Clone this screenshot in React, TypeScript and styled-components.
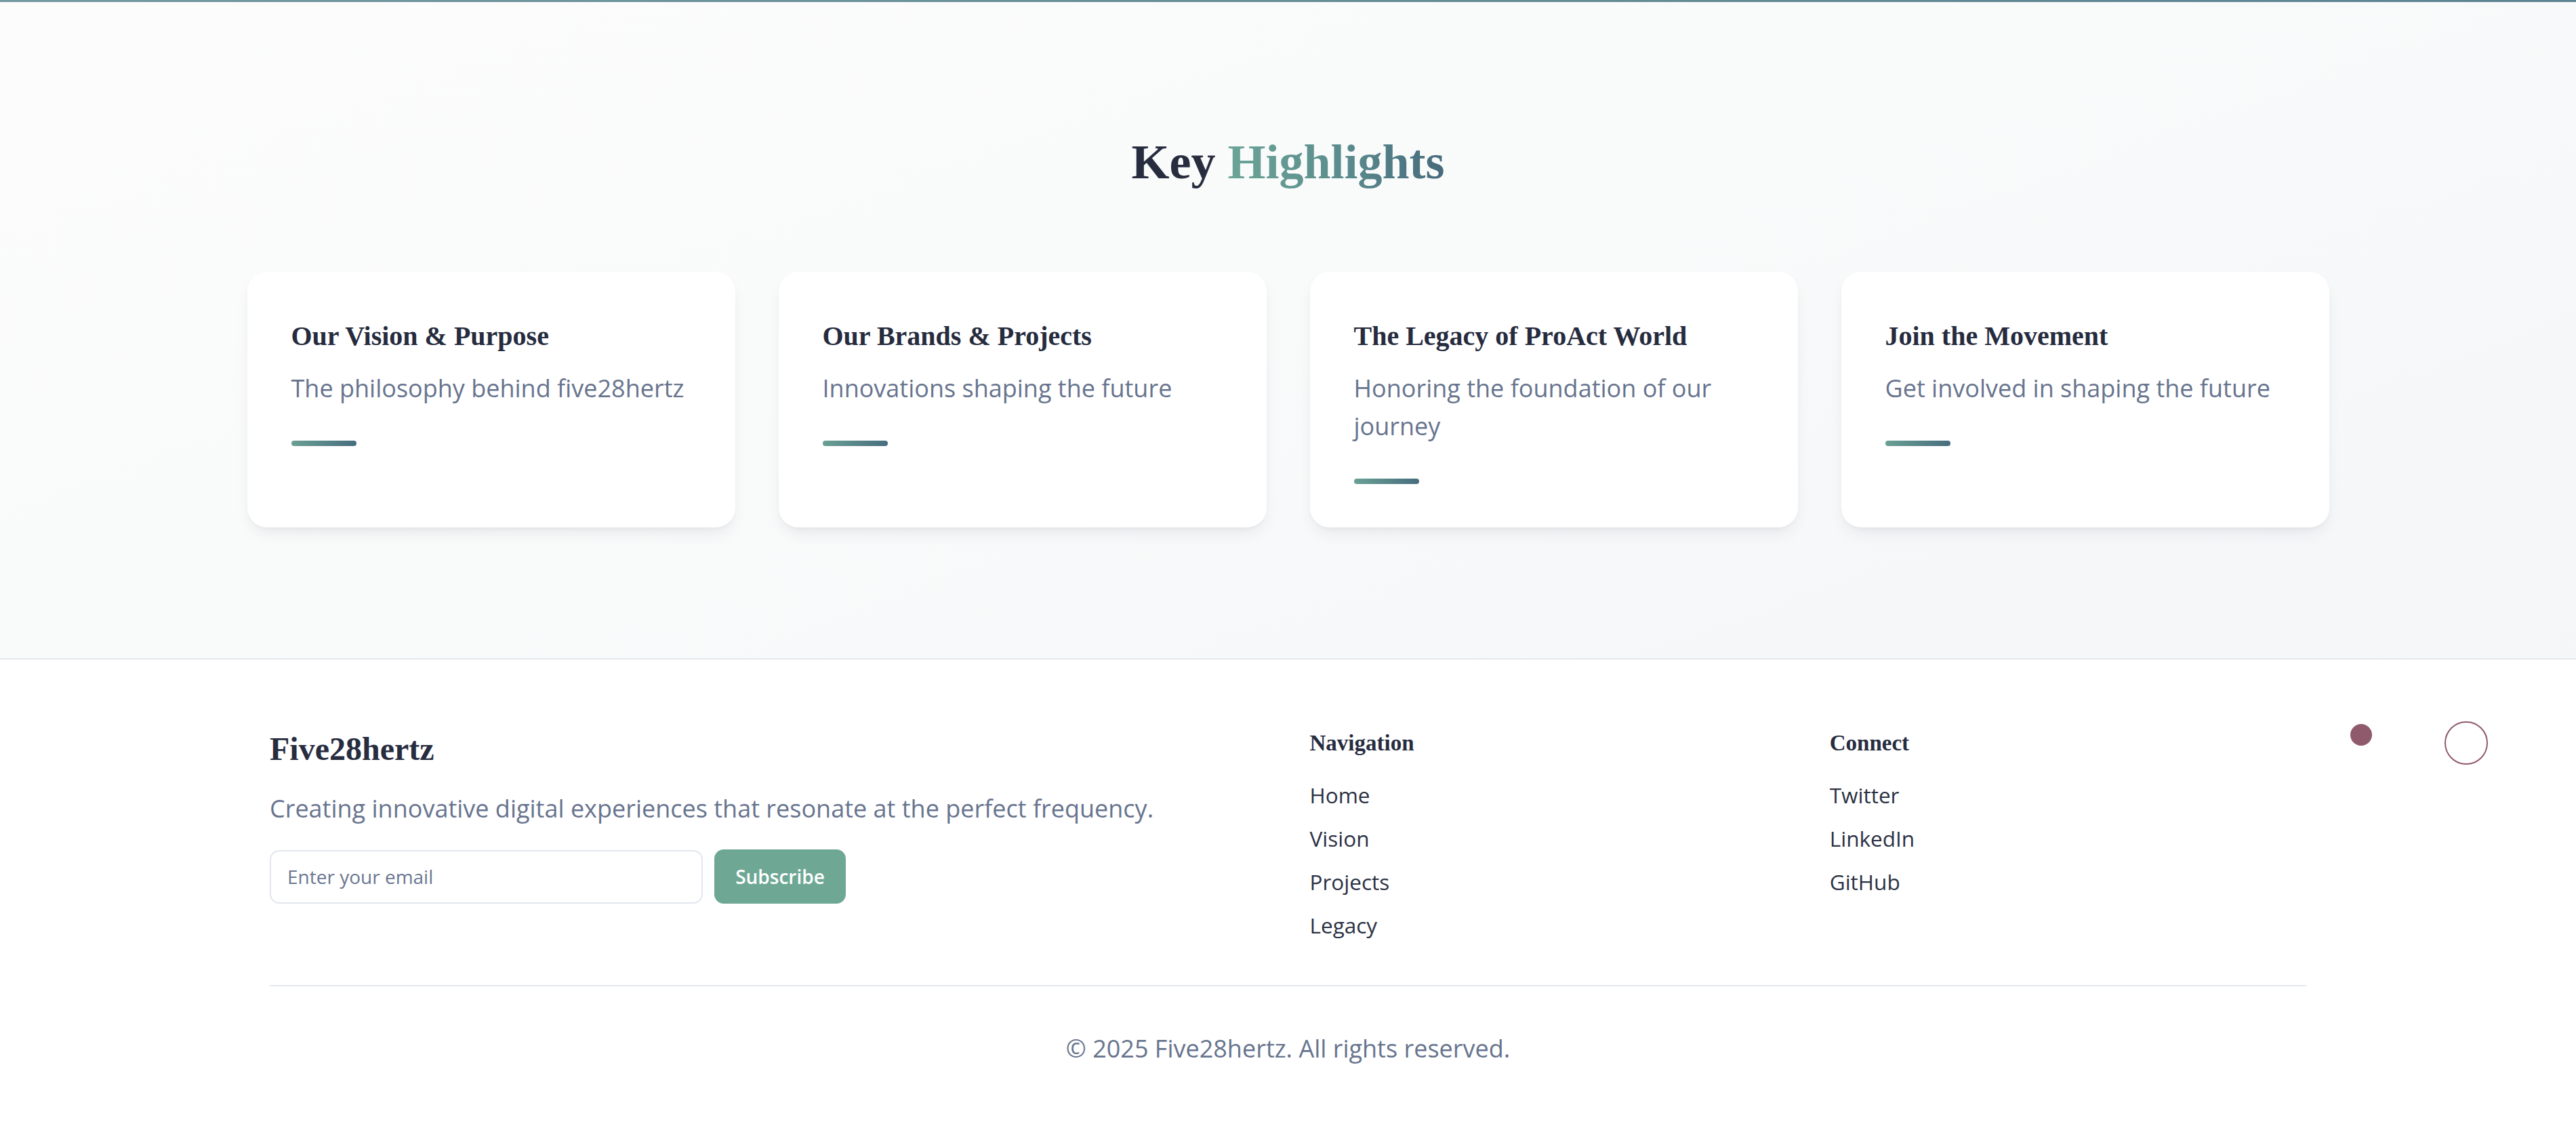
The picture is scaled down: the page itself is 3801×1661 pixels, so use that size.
import React from "react";
import styled, { createGlobalStyle } from "styled-components";

const GlobalStyle = createGlobalStyle`
  *, *::before, *::after { box-sizing: border-box; }
  html, body {
    margin: 0;
    padding: 0;
    background: #ffffff;
    font-family: "Open Sans", "Noto Sans", sans-serif;
    -webkit-font-smoothing: antialiased;
  }
`;

const SERIF = `"Liberation Serif", "DejaVu Serif", serif`;
const INK = "#272d3f";
const SLATE = "#67748e";
const LINE = "#e5e8ef";

const Page = styled.div`
  width: 100%;
  min-height: 100vh;
  background: #ffffff;
`;

const ProgressBar = styled.div`
  height: 3px;
  width: 100%;
  background: linear-gradient(90deg, #739aa0 0%, #668e98 50%, #5d8491 100%);
`;

const Highlights = styled.section`
  padding: 192px 0 193px;
  background: linear-gradient(160deg, #fcfcfc 0%, #f9fafa 45%, #f5f6f8 100%);
`;

const Heading = styled.h2`
  margin: 0 0 118px;
  text-align: center;
  font-family: ${SERIF};
  font-weight: 700;
  font-size: 72px;
  line-height: 88px;
  color: ${INK};
`;

const Accent = styled.span`
  background: linear-gradient(90deg, #6ba597 0%, #5a8b8d 55%, #466a7c 100%);
  -webkit-background-clip: text;
  background-clip: text;
  color: transparent;
`;

const CardGrid = styled.div`
  width: 3072px;
  margin: 0 auto;
  display: grid;
  grid-template-columns: repeat(4, 1fr);
  gap: 64px;
  align-items: stretch;
`;

const Card = styled.article`
  background: #ffffff;
  border-radius: 29px;
  padding: 64px 65px;
  box-shadow: 0 12px 26px -8px rgba(30, 40, 60, 0.1),
    0 4px 10px -4px rgba(30, 40, 60, 0.06);
`;

const CardTitle = styled.h3`
  margin: 0 0 18px;
  font-family: ${SERIF};
  font-weight: 700;
  font-size: 40px;
  line-height: 62px;
  color: #262c3e;
`;

const CardText = styled.p`
  margin: 0;
  font-size: 36px;
  line-height: 56px;
  color: ${SLATE};
`;

const CardBar = styled.div`
  margin-top: 49px;
  width: 96px;
  height: 8px;
  border-radius: 4px;
  background: linear-gradient(90deg, #6aa094 0%, #476d7e 100%);
`;

const Footer = styled.footer`
  position: relative;
  background: #ffffff;
  border-top: 2px solid ${LINE};
  padding: 100px 0 88px;
`;

const FooterInner = styled.div`
  width: 3005px;
  margin: 0 auto;
`;

const FooterGrid = styled.div`
  display: grid;
  grid-template-columns: repeat(4, 1fr);
  gap: 64px;
  align-items: start;
`;

const Brand = styled.div`
  grid-column: span 2;
`;

const BrandName = styled.h3`
  margin: 0 0 28px;
  font-family: ${SERIF};
  font-weight: 700;
  font-size: 48px;
  line-height: 64px;
  color: ${INK};
`;

const Tagline = styled.p`
  margin: 0 0 32px;
  font-size: 36px;
  line-height: 56px;
  color: ${SLATE};
`;

const SubscribeForm = styled.form`
  display: flex;
  gap: 17px;
  align-items: center;
`;

const EmailInput = styled.input`
  width: 639px;
  height: 79px;
  padding: 0 24px;
  border: 2px solid #e2e6ee;
  border-radius: 14px;
  background: #ffffff;
  font-family: "Open Sans", sans-serif;
  font-size: 28px;
  color: ${INK};
  outline: none;
  &::placeholder {
    color: #6b7790;
  }
`;

const SubscribeButton = styled.button`
  width: 194px;
  height: 80px;
  border: none;
  border-radius: 14px;
  background: #6ea895;
  color: #ffffff;
  font-family: "Open Sans", sans-serif;
  font-weight: 600;
  font-size: 28px;
  cursor: pointer;
`;

const LinkColumn = styled.nav`
  display: flex;
  flex-direction: column;
`;

const ColumnTitle = styled.h4`
  margin: 0 0 30px;
  font-family: ${SERIF};
  font-weight: 700;
  font-size: 33px;
  line-height: 46px;
  color: ${INK};
`;

const LinkList = styled.ul`
  list-style: none;
  margin: 0;
  padding: 0;
  display: flex;
  flex-direction: column;
  gap: 16px;
`;

const FooterLink = styled.a`
  display: block;
  font-size: 31.5px;
  line-height: 48px;
  color: #2b3144;
  text-decoration: none;
`;

const Divider = styled.hr`
  margin: 64px 0 0;
  border: none;
  border-top: 2px solid ${LINE};
`;

const Copyright = styled.p`
  margin: 64px 0 0;
  text-align: center;
  font-size: 36px;
  line-height: 56px;
  color: ${SLATE};
`;

const Orb = styled.span<{ $size: number; $top: number; $right: number; $filled?: boolean }>`
  position: absolute;
  top: ${(p) => p.$top}px;
  right: ${(p) => p.$right}px;
  width: ${(p) => p.$size}px;
  height: ${(p) => p.$size}px;
  border-radius: 50%;
  background: ${(p) => (p.$filled ? "#8f5a6b" : "transparent")};
  border: ${(p) => (p.$filled ? "none" : "2.5px solid #8f5a6b")};
`;

const cards = [
  { title: "Our Vision & Purpose", text: "The philosophy behind five28hertz" },
  { title: "Our Brands & Projects", text: "Innovations shaping the future" },
  { title: "The Legacy of ProAct World", text: "Honoring the foundation of our journey" },
  { title: "Join the Movement", text: "Get involved in shaping the future" },
];

const navLinks = ["Home", "Vision", "Projects", "Legacy"];
const connectLinks = ["Twitter", "LinkedIn", "GitHub"];

export default function App() {
  return (
    <Page>
      <GlobalStyle />
      <ProgressBar />
      <Highlights>
        <Heading>
          Key <Accent>Highlights</Accent>
        </Heading>
        <CardGrid>
          {cards.map((c) => (
            <Card key={c.title}>
              <CardTitle>{c.title}</CardTitle>
              <CardText>{c.text}</CardText>
              <CardBar />
            </Card>
          ))}
        </CardGrid>
      </Highlights>
      <Footer>
        <FooterInner>
          <FooterGrid>
            <Brand>
              <BrandName>Five28hertz</BrandName>
              <Tagline>
                Creating innovative digital experiences that resonate at the perfect frequency.
              </Tagline>
              <SubscribeForm onSubmit={(e) => e.preventDefault()}>
                <EmailInput type="email" placeholder="Enter your email" />
                <SubscribeButton type="submit">Subscribe</SubscribeButton>
              </SubscribeForm>
            </Brand>
            <LinkColumn>
              <ColumnTitle>Navigation</ColumnTitle>
              <LinkList>
                {navLinks.map((l) => (
                  <li key={l}>
                    <FooterLink href="#">{l}</FooterLink>
                  </li>
                ))}
              </LinkList>
            </LinkColumn>
            <LinkColumn>
              <ColumnTitle>Connect</ColumnTitle>
              <LinkList>
                {connectLinks.map((l) => (
                  <li key={l}>
                    <FooterLink href="#">{l}</FooterLink>
                  </li>
                ))}
              </LinkList>
            </LinkColumn>
          </FooterGrid>
          <Divider />
          <Copyright>© 2025 Five28hertz. All rights reserved.</Copyright>
        </FooterInner>
        <Orb $filled $size={32} $top={95} $right={301} />
        <Orb $size={64} $top={91} $right={130} />
      </Footer>
    </Page>
  );
}
